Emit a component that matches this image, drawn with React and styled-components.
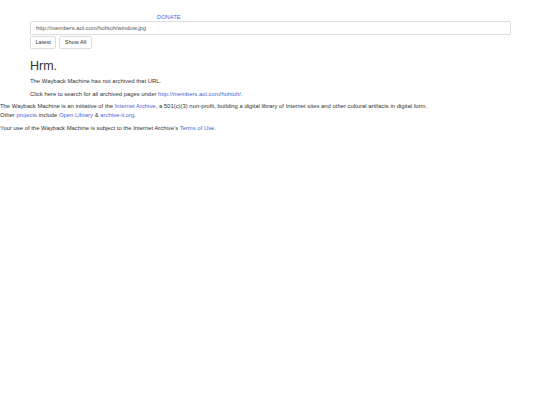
import React from "react";
import styled, { createGlobalStyle } from "styled-components";

const Global = createGlobalStyle`
  html, body { margin: 0; padding: 0; background: #fff; }
  body { font-family: "Liberation Sans", Arial, sans-serif; color: #333; }
`;

const Page = styled.div`
  width: 540px;
  font-size: 5.9px;
  line-height: 9px;
`;

const Top = styled.div`
  padding: 12px 30px 0 30px;
  display: flex;
  flex-direction: column;
`;

const Donate = styled.a`
  align-self: flex-start;
  margin-left: 127px;
  margin-top: 1px;
  color: #4a66d8;
  font-size: 5.6px;
  letter-spacing: 0.1px;
  text-decoration: none;
  height: 8px;
  line-height: 8px;
`;

const UrlInput = styled.div`
  width: 481px;
  height: 14px;
  box-sizing: border-box;
  border: 1px solid #ddd;
  border-radius: 2px;
  padding: 0 5px;
  display: flex;
  align-items: center;
  color: #555;
  font-size: 5.8px;
`;

const Buttons = styled.div`
  display: flex;
  gap: 3px;
  margin-top: 1px;
`;

const Btn = styled.div`
  height: 13px;
  box-sizing: border-box;
  border: 1px solid #ddd;
  border-radius: 2px;
  padding: 0 4.5px;
  display: flex;
  align-items: center;
  font-size: 5.6px;
  color: #333;
`;

const Body = styled.div`
  padding: 10px 30px 0 30px;
`;

const Title = styled.h1`
  margin: 0;
  font-weight: 400;
  font-size: 12.5px;
  line-height: 14px;
  color: #333;
`;

const P = styled.p`
  margin: ${(p) => p.$mt || 0}px 0 0 0;
  font-size: 5.9px;
  line-height: 9px;
`;

const Footer = styled.div`
  padding-top: 3px;
`;

const A = styled.a`
  color: #4a66d8;
  text-decoration: none;
`;

export default function App() {
  return (
    <Page>
      <Global />
      <Top>
        <Donate>DONATE</Donate>
        <UrlInput>http://members.aol.com/hohtoh/window.jpg</UrlInput>
        <Buttons>
          <Btn>Latest</Btn>
          <Btn>Show All</Btn>
        </Buttons>
      </Top>
      <Body>
        <Title>Hrm.</Title>
        <P $mt={4}>The Wayback Machine has not archived that URL.</P>
        <P $mt={4}>
          Click here to search for all archived pages under{" "}
          <A>http://members.aol.com/hohtoh/</A>.
        </P>
      </Body>
      <Footer>
        <P>
          The Wayback Machine is an initiative of the <A>Internet Archive</A>, a
          501(c)(3) non-profit, building a digital library of Internet sites and
          other cultural artifacts in digital form.
        </P>
        <P>
          Other <A>projects</A> include <A>Open Library</A> &amp;{" "}
          <A>archive-it.org</A>.
        </P>
        <P $mt={4}>
          Your use of the Wayback Machine is subject to the Internet Archive's{" "}
          <A>Terms of Use</A>.
        </P>
      </Footer>
    </Page>
  );
}
